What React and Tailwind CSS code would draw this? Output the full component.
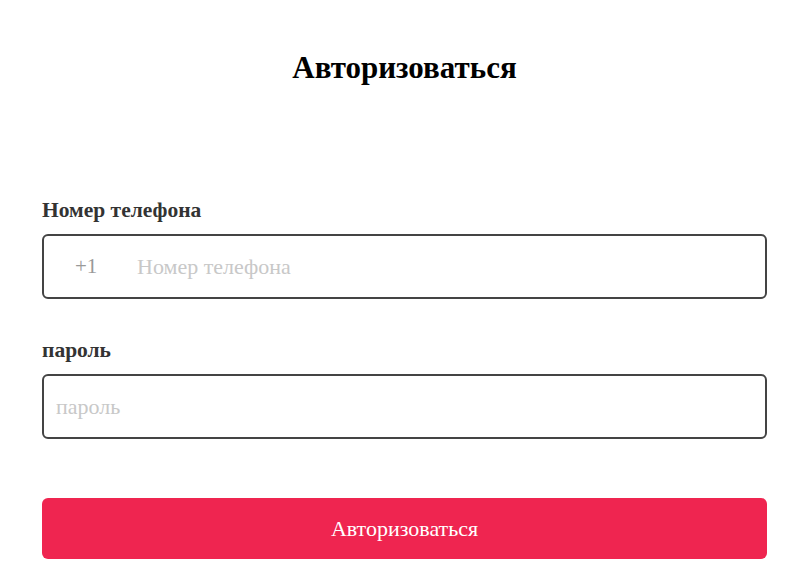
export default function App() {
  return (
    <div className="min-h-screen bg-white pl-[42px] pr-[33px] pt-[50px] font-['Liberation_Serif',serif] text-[#222]">
      <h1 className="text-center text-[31px] font-bold leading-[36px] text-black">Авторизоваться</h1>

      <form className="mt-[112px]" onSubmit={(e) => e.preventDefault()}>
        <label className="block text-[21.5px] font-bold leading-[24px] text-[#333]">Номер телефона</label>
        <div className="mt-[12px] flex h-[65px] items-center rounded-[6px] border-2 border-[#444]">
          <span className="w-[93px] shrink-0 pl-[31px] text-[21px] text-[#999]">+1</span>
          <input
            type="tel"
            placeholder="Номер телефона"
            className="h-full min-w-0 flex-1 bg-transparent text-[22px] outline-none placeholder:text-[#c8c8c8]"
          />
        </div>

        <label className="mt-[39px] block text-[21.5px] font-bold leading-[24px] text-[#333]">пароль</label>
        <div className="mt-[12px] flex h-[65px] items-center rounded-[6px] border-2 border-[#444]">
          <input
            type="password"
            placeholder="пароль"
            className="h-full min-w-0 flex-1 bg-transparent pl-[12px] text-[22px] outline-none placeholder:text-[#c8c8c8]"
          />
        </div>

        <button
          type="submit"
          className="mt-[59px] h-[61px] w-full rounded-[6px] bg-[#ef2550] text-[22px] text-white"
        >
          Авторизоваться
        </button>
      </form>
    </div>
  );
}
